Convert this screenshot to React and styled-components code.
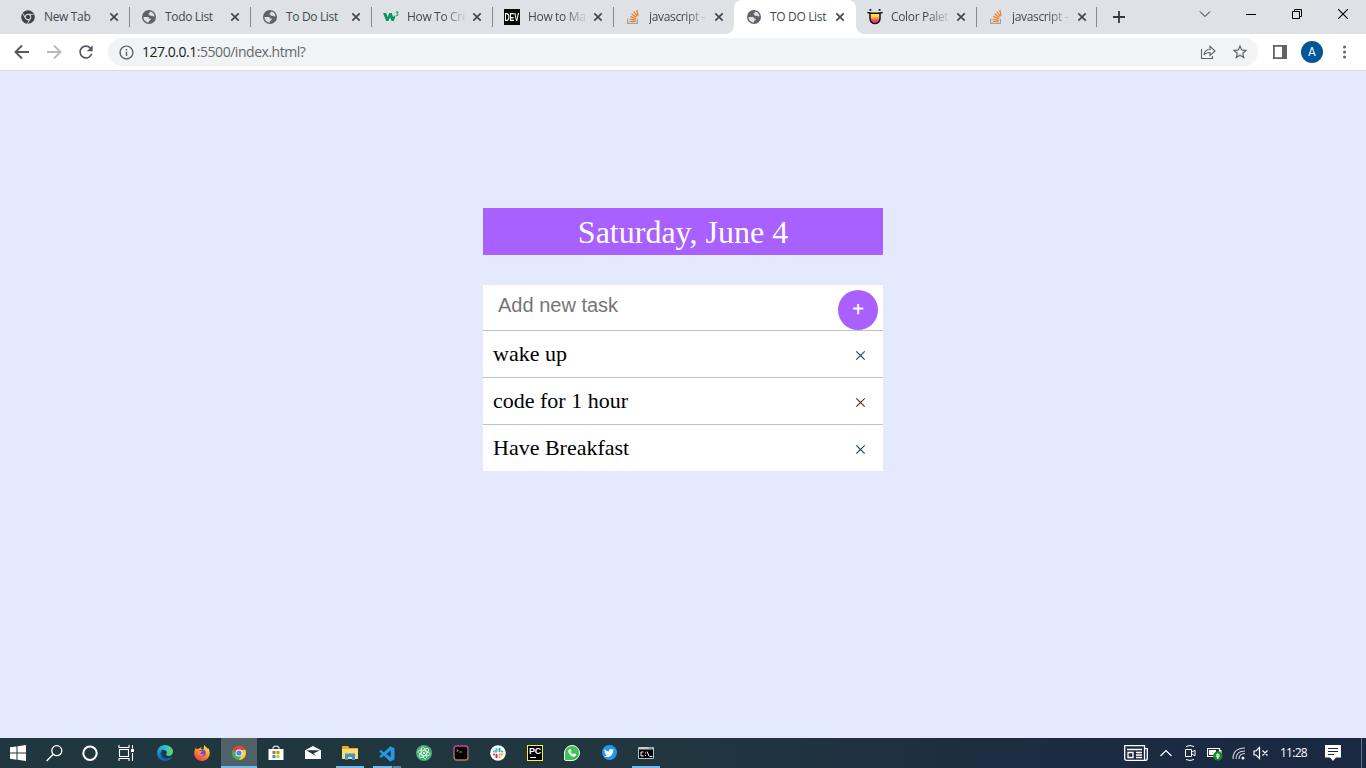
import React from "react";
import styled, { createGlobalStyle, css } from "styled-components";
import { FaChrome, FaTwitter } from "react-icons/fa";
import { MdInfoOutline, MdRefresh, MdStarBorder } from "react-icons/md";
import { BiLogoVisualStudio } from "react-icons/bi";

const GlobalStyle = createGlobalStyle`
  * { box-sizing: border-box; }
  body { margin: 0; overflow: hidden; background: #e4e9fd; }
  svg { display: block; flex: none; }
`;

const uiFont = `"Segoe UI", "Open Sans", "Noto Sans", sans-serif`;

const Screen = styled.div`
  width: 1366px;
  height: 768px;
  display: flex;
  flex-direction: column;
  overflow: hidden;
`;

/* ---------- Browser tabs ---------- */
const TabStrip = styled.div`
  flex: none;
  height: 34px;
  display: flex;
  padding-left: 9px;
  background: #dee1e6;
`;

const activeTab = css`
  margin-left: -1px;
  width: 122px;
  padding-left: 12px;
  background: #fff;
  border-radius: 8px 8px 0 0;
  position: relative;
  &::before, &::after {
    content: "";
    position: absolute;
    bottom: 0;
    width: 8px;
    height: 8px;
  }
  &::before { left: -8px; background: radial-gradient(circle at 0 0, transparent 7.5px, #fff 8px); }
  &::after { right: -8px; background: radial-gradient(circle at 100% 0, transparent 7.5px, #fff 8px); }
`;

const TabItem = styled.div`
  flex: none;
  width: 121px;
  height: 34px;
  display: flex;
  align-items: center;
  padding-left: 11px;
  ${(p) => p.$active && activeTab}
  &:nth-child(9) { width: 120px; }
`;

const TabTitle = styled.span`
  width: 58px;
  margin: 0 4px 0 8px;
  white-space: nowrap;
  font: 12px/18px ${uiFont};
  letter-spacing: -0.34px;
  color: #45494d;
  ${(p) => p.$fade && css`mask-image: linear-gradient(to right, #000 62%, transparent 104%);`}
`;

const TabDivider = styled.span`
  width: 1px;
  height: 20px;
  margin-left: auto;
  background: ${(p) => (p.$hidden ? "transparent" : "#85888d")};
`;

const NewTab = styled.div`
  width: 16px;
  margin: 9px 0 0 14px;
`;

const WindowControls = styled.div`
  margin-left: auto;
  height: 28px;
  display: flex;
  align-items: center;
`;

const WindowButton = styled.div`
  width: 46px;
  display: flex;
  justify-content: center;
`;

/* ---------- Toolbar ---------- */
const Toolbar = styled.div`
  flex: none;
  height: 37px;
  display: flex;
  align-items: center;
  padding: 0 12px 0 12px;
  background: #fff;
  border-bottom: 1px solid #dbdde3;
`;

const NavButtons = styled.div`
  display: flex;
  gap: 12px;
  width: 96px;
`;

const AddressBar = styled.div`
  width: 1150px;
  height: 28px;
  display: flex;
  align-items: center;
  padding: 0 9px 0 10px;
  border-radius: 14px;
  background: #f1f3f4;
`;

const Url = styled.span`
  margin-left: 7px;
  font: 14px/20px ${uiFont};
  letter-spacing: -0.47px;
  color: #202124;
  span { color: #64686c; }
`;

const AddressActions = styled.div`
  margin-left: auto;
  display: flex;
  align-items: center;
  gap: 15px;
`;

const ToolbarActions = styled.div`
  display: flex;
  align-items: center;
  margin-left: 14px;
`;

const Avatar = styled.div`
  width: 22px;
  height: 22px;
  margin: 0 14px 0 13px;
  border-radius: 50%;
  background: #01579b;
  color: #fff;
  text-align: center;
  font: 12px/22px Roboto, sans-serif;
`;

/* ---------- To-do page ---------- */
const Page = styled.main`
  flex: 1;
  background: #e4e9fd;
  padding-top: 137px;
`;

const Container = styled.div`
  width: 400px;
  margin: 0 auto;
`;

const DateHeading = styled.h1`
  margin: 0 0 30px;
  height: 47px;
  background: #a860ff;
  color: #fff;
  text-align: center;
  font: 400 32px/49px "Liberation Serif", serif;
`;

const TaskCard = styled.section`
  background: #fff;
`;

const TaskForm = styled.div`
  height: 45px;
  display: flex;
  justify-content: space-between;
  padding: 5px 5px 0 15px;
`;

const TaskInput = styled.input`
  border: 0;
  padding: 0;
  width: 280px;
  height: 30px;
  outline: 0;
  background: transparent;
  font: 20px "Liberation Sans", sans-serif;
  &::placeholder { color: #757575; opacity: 1; }
`;

const AddButton = styled.button`
  width: 40px;
  height: 40px;
  padding: 0 0 2px;
  border: 0;
  border-radius: 50%;
  background: #a860ff;
  color: #fff;
  font: 20px "Liberation Sans", sans-serif;
  -webkit-text-stroke: 0.25px #fff;
`;

const TaskList = styled.ul`
  list-style: none;
  margin: 0;
  padding: 0;
`;

const TaskRow = styled.li`
  height: 47px;
  display: flex;
  align-items: center;
  justify-content: space-between;
  padding: 0 17px 0 10px;
  border-top: 1px solid #c0c0c0;
  font: 22px/46px "Liberation Serif", serif;
  color: #000;
`;

const DeleteMark = styled.svg`
  margin-top: 3px;
`;

/* ---------- Taskbar ---------- */
const Taskbar = styled.footer`
  flex: none;
  height: 30px;
  display: flex;
  background: linear-gradient(90deg, #20373f 0, #21363f 50%, #1c2a42 80%, #1b2842 100%);
`;

const SystemButtons = styled.div`
  display: flex;
  width: 147px;
`;

const Apps = styled.div`
  display: flex;
  gap: 1px;
`;

const TaskButton = styled.div`
  width: 36px;
  height: 30px;
  display: flex;
  flex-direction: column;
  align-items: center;
  justify-content: space-between;
  padding-top: 7px;
  background: ${(p) => (p.$focused ? "#506168" : "transparent")};
`;

const Indicator = styled.span`
  width: ${(p) => (p.$wide ? 36 : 28)}px;
  height: 2px;
  background: ${(p) => (p.$split ? "linear-gradient(90deg,#76b9ed 19px,#3c5968 19px,#3c5968 20px,#5389ae 20px)" : "#76b9ed")};
`;

const Tray = styled.div`
  margin-left: auto;
  width: 243px;
  display: flex;
  align-items: center;
`;

const TrayIcon = styled.span`
  margin-left: ${(p) => p.$gap}px;
`;

const Clock = styled.span`
  width: 28px;
  margin-left: 11px;
  white-space: nowrap;
  font: 12px/30px ${uiFont};
  letter-spacing: -0.75px;
  color: #fff;
`;

const DesktopEdge = styled.span`
  width: 1px;
  height: 30px;
  margin-left: 20px;
  background: #687184;
`;

const Globe = () => (
  <svg width="16" height="16" viewBox="0 0 16 16">
    <circle cx="8" cy="8" r="7" fill="#5f6368" />
    <path d="M9.300 2.500c2.300.5 4 2.400 4.200 4.800-.8.500-1.800.3-2.300-.5H9.500c-.8 0-1.200-.6-1-1.300-.8 0-1.200-.7-.8-1.300.6-.2 1.200-.7 1.600-1.700z" fill="#dee1e6" />
    <path d="M2.500 8h3.800c1.300 0 1.800.7 1.700 1.600h1.200c.8.200.8 1.300 0 1.700L7.900 12v1.500c-3 0-5.300-2.300-5.400-5.500z" fill="#dee1e6" />
  </svg>
);

const StackOverflow = () => (
  <svg width="16" height="16" viewBox="0 0 16 16" fill="none">
    <path d="M2.600 9.800v4.600h9.800V9.800" stroke="#a0a3a6" strokeWidth="1.200" />
    <path d="M4.600 12.300h6M4.700 10l5.900 1.100M5.300 7.400l5.400 2.400M6.600 4.800l4.700 3.700M8.900 2.500l3.500 4.900M11.800 1l1.300 5.700" stroke="#f47d20" strokeWidth="1.250" />
  </svg>
);

const W3Schools = () => (
  <svg width="16" height="16" viewBox="0 0 16 16" fill="#059862">
    <path d="M0 4h3.200l1.500 4.300L6.300 4h2.500l1.400 4.300L11 6.500l1.500.8L10.800 12H8.600L7 8.200 5.300 12H3.200z" />
    <path d="M12.700 3h2.500l-1.300 1.700c1.800.1 1.700 2.500-1.100 1.800" fill="none" stroke="#059862" />
  </svg>
);

const DevMark = styled.span`
  flex: none;
  width: 16px;
  height: 16px;
  display: flex;
  justify-content: center;
  background: #090909;
  color: #fff;
  font: 700 10.5px/16px "Liberation Sans", sans-serif;
  span { transform: scaleX(0.68); }
`;

const ColorHunt = () => (
  <svg width="16" height="16" viewBox="0 0 16 16">
    <path d="M3 4h10v5.500a5 5 0 0 1-10 0z" fill="#ffde32" />
    <path d="M3 8h10v1.500a5 5 0 0 1-.7 2.500H3.700A5 5 0 0 1 3 9.500z" fill="#ff9a51" />
    <path d="M3.500 10.300h9A5 5 0 0 1 8 14.500a5 5 0 0 1-4.500-4.200z" fill="#f6416c" />
    <path d="M.4 3.300c2 1.100 13.200 1.100 15.200 0M3 4v5.600a5 5 0 0 0 10 0V4" fill="none" stroke="#15151a" strokeWidth="1.500" />
    <path d="M2.500.8h1.800M11.700.8h1.800" stroke="#15151a" strokeWidth="1.700" />
  </svg>
);

const CloseIcon = () => (
  <svg width="16" height="16" viewBox="0 0 16 16">
    <path d="M4.300 4.300l7.400 7.400m0-7.400l-7.400 7.400" stroke="#45494d" strokeWidth="1.700" />
  </svg>
);

const ChromeMark = styled(FaChrome)`
  margin: 0 1px;
  color: #3f4347;
`;

const tabs = [
  { title: "New Tab", icon: <ChromeMark size={14} /> },
  { title: "Todo List", icon: <Globe /> },
  { title: "To Do List", icon: <Globe /> },
  { title: "How To Cre", icon: <W3Schools />, fade: true },
  { title: "How to Ma", icon: <DevMark><span>DEV</span></DevMark>, fade: true },
  { title: "javascript -", icon: <StackOverflow />, fade: true },
  { title: "TO DO List", icon: <Globe />, active: true },
  { title: "Color Palet", icon: <ColorHunt />, fade: true },
  { title: "javascript -", icon: <StackOverflow />, fade: true },
];

const ChromeLogo = () => (
  <svg width="16" height="16" viewBox="0 0 16 16">
    <circle cx="8" cy="8" r="7" fill="#4caf50" />
    <path d="M1.940 4.500A7 7 0 0 1 14.060 4.500L8 5 5 9.500z" fill="#ea4335" />
    <path d="M14.060 4.500A7 7 0 0 1 8 15l3-5.300L10.500 4.800z" fill="#ffcd40" />
    <path d="M8 4.500h6.060" stroke="#ea4335" strokeWidth="1" />
    <circle cx="8" cy="8" r="3.500" fill="#fff" />
    <circle cx="8" cy="8" r="2.600" fill="#4285f4" />
  </svg>
);

const EdgeLogo = () => (
  <svg width="16" height="16" viewBox="0 0 16 16">
    <defs>
      <linearGradient id="edgeTop"><stop stopColor="#249fde" /><stop offset=".55" stopColor="#32c3c8" /><stop offset="1" stopColor="#68d957" /></linearGradient>
      <linearGradient id="edgeLow" x2="0" y2="1"><stop stopColor="#209ae5" /><stop offset="1" stopColor="#125cb0" /></linearGradient>
    </defs>
    <path d="M0 8C0 3.600 3.600 0 8 0s8 3 8 6.700c0 2.500-2 4.300-4.200 4.300-2 0-2.700-.8-2.700-1.400 0-.5.700-.8.700-2C9.800 5.900 8 4.700 6 4.700 3 4.700.4 6.500 0 8z" fill="url(#edgeTop)" />
    <path d="M0 8c.5-2.200 3-3.500 5.500-3.300C4.200 5.500 3.700 6.600 3.700 8.500c0 3 2.500 5 5.800 5 2 0 3.500-.8 4.500-1.500.5-.3.900.100.500.700C13.200 14.700 10.800 16 8 16c-4.400 0-8-3.600-8-8z" fill="url(#edgeLow)" />
    <path d="M5.500 8c0-1.200.5-2.200 1.500-2.800-2.600 1-3.500 2.700-3.300 4.400.4 3.200 3.300 5 7 4.200C7.500 13 5.500 11 5.500 8z" fill="#114a8b" />
  </svg>
);

const FirefoxLogo = () => (
  <svg width="16" height="16" viewBox="0 0 16 16">
    <defs>
      <linearGradient id="fox" x1=".8" y1="0" x2=".2" y2="1"><stop stopColor="#fff04b" /><stop offset=".45" stopColor="#ff9a22" /><stop offset="1" stopColor="#f02e58" /></linearGradient>
    </defs>
    <path d="M2.200 2.200l.3 2 1.800-.5C5.500 4 6 2.500 7.500 2L7.200 4l2 .5C10.500 3 9.500 1 10.200 0c1 1.600 2.700 2.200 3.200 3.800l.8-.7c2.500 4 2 8.500-1.500 11.300-4 3.200-10.700 1.500-12.200-3.600C-.2 8 .500 4.500 2.200 2.200z" fill="url(#fox)" />
    <circle cx="8.200" cy="8.100" r="3.500" fill="#7542e5" />
    <path d="M4 5.500l3.200.3 1.300 1-2.300 1.300c.6 1.800 3 1.800 4.200.8-.4 2.400-5.500 3.300-7-.3z" fill="#ff8a2c" />
  </svg>
);

const AtomLogo = () => (
  <svg width="16" height="16" viewBox="0 0 16 16" fill="none">
    <circle cx="8" cy="8" r="8" fill="#45ae77" />
    <g stroke="#dcfae9" strokeWidth=".9">
      <ellipse cx="8" cy="8" rx="6" ry="2.500" transform="rotate(15 8 8)" />
      <ellipse cx="8" cy="8" rx="6" ry="2.500" transform="rotate(75 8 8)" />
      <ellipse cx="8" cy="8" rx="6" ry="2.500" transform="rotate(135 8 8)" />
    </g>
    <circle cx="8" cy="8" r="1" fill="#fff" />
  </svg>
);

const TerminalLogo = () => (
  <svg width="16" height="16" viewBox="0 0 16 16" fill="none">
    <defs><linearGradient id="term" x2="0" y2="1"><stop stopColor="#ca459f" /><stop offset="1" stopColor="#b87a4a" /></linearGradient></defs>
    <rect x="1" y="1" width="14" height="14" rx="2.500" fill="#000" stroke="url(#term)" strokeWidth="1.400" />
    <path d="M3.700 4.500l1.600 1-1.600 1M6.500 7h2.300" stroke="#ddd" strokeWidth=".8" />
  </svg>
);

const SlackLogo = () => (
  <svg width="16" height="16" viewBox="0 0 16 16" fill="none" strokeWidth="2" strokeLinecap="round">
    <circle cx="8" cy="8" r="7.800" fill="#fff" />
    <path d="M6.500 4v2.300M3.900 6.500h2.300" stroke="#36c5f0" />
    <path d="M9.500 3.700v2.600M12 6.500h.200" stroke="#2eb67d" />
    <path d="M9.700 9.500h2.500M9.500 12v.2" stroke="#ecb22e" />
    <path d="M6.500 9.700v2.500M4 9.500h-.1" stroke="#e01e5a" />
  </svg>
);

const PyCharmBox = styled.span`
  width: 16px;
  height: 16px;
  border: 1px solid #f5f33e;
  background: #000;
  color: #fff;
  font: 700 9px/11px "Liberation Sans", sans-serif;
  letter-spacing: -0.3px;
  padding-left: 1px;
  &::after { content: ""; display: block; width: 6px; height: 1px; margin: 0 0 0 1px; background: #fff; }
`;

const WhatsAppBadge = styled.span`
  width: 16px;
  height: 16px;
  display: grid;
  place-items: center;
  border: 1px solid #f2fff5;
  border-radius: 50% 50% 50% 2px;
  background: #40c351;
`;

const Handset = () => (
  <svg width="10" height="10" viewBox="0 0 10 10"><path d="M2.200 1.200L3.500 1l1 2-.8 1c.6 1.100 1.300 1.700 2.500 2.200l.9-.9 2 1-.2 1.200C7.500 9.500 5 8.700 3.300 7 1.400 5.200.4 2.800 2.200 1.200z" fill="#fff" /></svg>
);

const TwitterBadge = styled.span`
  width: 15px;
  height: 15px;
  display: grid;
  place-items: center;
  border-radius: 50%;
  background: #1d9bf0;
`;

const StoreLogo = () => (
  <svg width="16" height="16" viewBox="0 0 16 16">
    <path d="M5 5V3.300C5 .4 11 .4 11 3.300V5" fill="none" stroke="#d8dde0" strokeWidth="1.100" />
    <path d="M.5 4h15v11h-15z" fill="#fff" />
    <path d="M4.500 6h3v3h-3z" fill="#f25022" /><path d="M8.500 6h3v3h-3z" fill="#7fba00" />
    <path d="M4.500 10h3v3h-3z" fill="#00a4ef" /><path d="M8.500 10h3v3h-3z" fill="#ffb900" />
  </svg>
);

const MailLogo = () => (
  <svg width="16" height="16" viewBox="0 0 16 16">
    <path d="M0 5.200L8 1l8 4.200V14H0z" fill="#fff" />
    <path d="M1.200 5.300h13.600L8.500 8.500l2.800 2.700z" fill="#20353e" />
  </svg>
);

const FolderLogo = () => (
  <svg width="16" height="16" viewBox="0 0 16 16">
    <path d="M0 1h6l1.500 2H16v3H0z" fill="#e9ae22" />
    <path d="M0 4h16v10H0z" fill="#ffd96a" />
    <path d="M3 15V8.500h10V15h-3v-3H6v3z" fill="#3b96d9" />
  </svg>
);

const CmdLogo = () => (
  <svg width="16" height="16" viewBox="0 0 16 16">
    <path d="M.5 2.500h15v11H.5z" fill="#000" stroke="#bbc1c5" />
    <path d="M1 2h14v2.500H1z" fill="#c7cdd1" /><path d="M10.500 2.500h4v1h-4z" fill="#5b7b9b" />
    <path d="M5.500 7H3v4h2.500M7.500 7.500v1m0 1.500v1M9 6.500l2 4.500M11.500 11.500h3" fill="none" stroke="#fff" />
  </svg>
);

const systemIcons = [
  <svg key="windows" width="16" height="16" viewBox="0 0 16 16"><path fill="#fff" d="M0 2.300L6.500 1.400v6.200H0zM7.500 1.200L16 0v7.600H7.500zM0 8.500h6.500v6.200L0 13.800zM7.500 8.500H16V16l-8.500-1.200z" /></svg>,
  <svg key="search" width="17" height="17" viewBox="0 0 17 17" fill="none" stroke="#fff" strokeWidth="1.300"><circle cx="10.800" cy="5.700" r="5" /><path d="M7.200 9.300L.6 16" /></svg>,
  <svg key="cortana" width="16" height="16" viewBox="0 0 16 16"><circle cx="8" cy="8.300" r="6.700" fill="none" stroke="#fff" strokeWidth="2" /></svg>,
  <svg key="taskview" width="17" height="16" viewBox="0 0 17 16" fill="none" stroke="#fff" strokeWidth="1.100"><path d="M1 0v2.500h10V0M1.500 4.500h9v7h-9zM1 16v-2.500h10V16M14.500 0v3.500M14.500 8v8" /><path d="M13 4h3v3h-3z" fill="#fff" stroke="none" /></svg>,
];

const apps = [
  { id: "edge", icon: <EdgeLogo /> },
  { id: "firefox", icon: <FirefoxLogo /> },
  { id: "chrome", icon: <ChromeLogo />, focused: true, open: true },
  { id: "store", icon: <StoreLogo /> },
  { id: "mail", icon: <MailLogo /> },
  { id: "folder", icon: <FolderLogo />, open: true },
  { id: "code", icon: <BiLogoVisualStudio size={18} color="#229be6" />, open: true, split: true },
  { id: "atom", icon: <AtomLogo /> },
  { id: "terminal", icon: <TerminalLogo /> },
  { id: "slack", icon: <SlackLogo /> },
  { id: "pycharm", icon: <PyCharmBox>PC</PyCharmBox> },
  { id: "whatsapp", icon: <WhatsAppBadge><Handset /></WhatsAppBadge> },
  { id: "twitter", icon: <TwitterBadge><FaTwitter size={10} color="#fff" /></TwitterBadge> },
  { id: "cmd", icon: <CmdLogo />, open: true },
];

const tasks = ["wake up", "code for 1 hour", "Have Breakfast"];
const markColors = ["#1d4858", "#682528", "#1d4858"];

function BrowserTabs() {
  return (
    <TabStrip>
      {tabs.map((t, i) => (
        <TabItem key={i} $active={t.active}>
          {t.icon}
          <TabTitle $fade={t.fade}>{t.title}</TabTitle>
          <CloseIcon />
          <TabDivider $hidden={i === 5 || i === 6} />
        </TabItem>
      ))}
      <NewTab>
        <svg width="16" height="16" viewBox="0 0 16 16"><path d="M8 2v12M2 8h12" stroke="#35383b" strokeWidth="1.800" /></svg>
      </NewTab>
      <WindowControls>
        <WindowButton><svg width="12" height="12" viewBox="0 0 12 12"><path d="M1 3.500l5 5 5-5" fill="none" stroke="#222" /></svg></WindowButton>
        <WindowButton><svg width="10" height="10" viewBox="0 0 10 10"><path d="M0 5.500h10" stroke="#000" /></svg></WindowButton>
        <WindowButton><svg width="10" height="10" viewBox="0 0 10 10" fill="none" stroke="#000"><path d="M.5 2.500h7v7h-7zM2.500 2.500v-2h7v7h-2" /></svg></WindowButton>
        <WindowButton><svg width="10" height="10" viewBox="0 0 10 10"><path d="M0 0l10 10M10 0L0 10" stroke="#000" strokeWidth="1.100" /></svg></WindowButton>
      </WindowControls>
    </TabStrip>
  );
}

function BrowserToolbar() {
  return (
    <Toolbar>
      <NavButtons>
        <svg width="20" height="20" viewBox="0 0 20 20" fill="none" stroke="#55595e" strokeWidth="1.900"><path d="M17 10H4M10 3.500L3.500 10l6.500 6.500" /></svg>
        <svg width="20" height="20" viewBox="0 0 20 20" fill="none" stroke="#b8babc" strokeWidth="1.900"><path d="M3 10h13M10 3.500l6.500 6.500-6.500 6.500" /></svg>
        <MdRefresh size={20} color="#55595e" />
      </NavButtons>
      <AddressBar>
        <MdInfoOutline size={17} color="#5f6368" />
        <Url>127.0.0.1<span>:5500/index.html?</span></Url>
        <AddressActions>
          <svg width="16" height="16" viewBox="0 0 16 16" fill="none" stroke="#5f6368" strokeWidth="1.100"><path d="M1.500 5v9.500h11V12M4 11c.5-4 2.500-5.500 6-5.500V2.300L15 7l-5 4.500V8.500C7 8.500 5.300 9 4 11z" /></svg>
          <MdStarBorder size={18} color="#5f6368" />
        </AddressActions>
      </AddressBar>
      <ToolbarActions>
        <svg width="16" height="16" viewBox="0 0 16 16"><path d="M1.900 1.900h12.200v12.200H1.900z" fill="#fff" stroke="#5f6368" strokeWidth="1.800" /><path d="M10 1h5v14h-5z" fill="#5f6368" /></svg>
        <Avatar>A</Avatar>
        <svg width="16" height="16" viewBox="0 0 16 16" fill="#5f6368"><circle cx="7.500" cy="3" r="1.500" /><circle cx="7.500" cy="8" r="1.500" /><circle cx="7.500" cy="13" r="1.500" /></svg>
      </ToolbarActions>
    </Toolbar>
  );
}

function TodoPage() {
  return (
    <Page>
      <Container>
        <DateHeading>Saturday, June 4</DateHeading>
        <TaskCard>
          <TaskForm>
            <TaskInput placeholder="Add new task" />
            <AddButton>+</AddButton>
          </TaskForm>
          <TaskList>
            {tasks.map((task, i) => (
              <TaskRow key={task}>
                {task}
                <DeleteMark width="11" height="11" viewBox="0 0 11 11"><path d="M1.300 1.300l8.400 8.400M9.700 1.300l-8.400 8.400" stroke={markColors[i]} strokeWidth="1.150" /></DeleteMark>
              </TaskRow>
            ))}
          </TaskList>
        </TaskCard>
      </Container>
    </Page>
  );
}

function SystemTaskbar() {
  return (
    <Taskbar>
      <SystemButtons>{systemIcons.map((icon) => <TaskButton key={icon.key}>{icon}</TaskButton>)}</SystemButtons>
      <Apps>
        {apps.map((a) => (
          <TaskButton key={a.id} $focused={a.focused}>
            {a.icon}
            {a.open && <Indicator $wide={a.focused} $split={a.split} />}
          </TaskButton>
        ))}
      </Apps>
      <Tray>
        <TrayIcon $gap={1}><svg width="24" height="16" viewBox="0 0 24 16" fill="none" stroke="#fff" strokeWidth="1.300"><path d="M1 .7h19.500v14.600H2.500C1.500 15.300.7 14.500.7 13.500V.7zM20.500 3.700h2.800v9.600c0 1.200-.8 2-1.800 2h-2M3 4.500h15M12 7.500h6M12 10h6M12 12.500h6M4 7.500h5v5H4z" /></svg></TrayIcon>
        <TrayIcon $gap={12}><svg width="12" height="8" viewBox="0 0 12 8"><path d="M.5 7L6 1.500 11.500 7" fill="none" stroke="#fff" strokeWidth="1.200" /></svg></TrayIcon>
        <TrayIcon $gap={12}><svg width="12" height="16" viewBox="0 0 12 16" fill="none" stroke="#fff"><path d="M1.500 4.500h6v7h-6zM8 7l3-1.800v5.600L8 9M2 1.500Q6-.5 10 1.500M2 14.500q4 2 8 0" /></svg></TrayIcon>
        <TrayIcon $gap={11}><svg width="16" height="16" viewBox="0 0 16 16"><path d="M.5 3.500h12v8H.5zM12.500 5.500h1.500v3h-1.500" fill="none" stroke="#fff" strokeWidth="1.200" /><path d="M2 5h7v5H2z" fill="#fff" /><circle cx="10.800" cy="11" r="4.700" fill="#148a22" /><path d="M10.800 14V9m0-.5c-2 1.500-2 3.500 0 4 2-.5 2-2.500 0-4z" fill="none" stroke="#fff" /></svg></TrayIcon>
        <TrayIcon $gap={9}><svg width="14" height="14" viewBox="0 0 14 14" fill="none" stroke="#d0d7de" strokeWidth="1.150"><path d="M1 13C1 6 5 2 13 2M4 13c0-5 3-8 9-8M7 13c0-3.500 2.500-5.500 6-5.500" /><circle cx="11" cy="12" r="1.500" fill="#fff" stroke="none" /></svg></TrayIcon>
        <TrayIcon $gap={7}><svg width="16" height="14" viewBox="0 0 16 14" fill="none" stroke="#fff" strokeWidth="1.200"><path d="M1 5h2l3.500-3.500v11L3 9H1zM9.500 4.500l5 5m0-5l-5 5" /></svg></TrayIcon>
        <Clock>11:28</Clock>
        <TrayIcon $gap={17}><svg width="16" height="16" viewBox="0 0 16 16"><path d="M0 0h16v12.500h-5L8 16l-3-3.500H0z" fill="#fff" /><path d="M3 3.500h10M3 6.500h10M3 9.500h6" stroke="#1b2842" /></svg></TrayIcon>
        <DesktopEdge />
      </Tray>
    </Taskbar>
  );
}

export default function App() {
  return (
    <>
      <GlobalStyle />
      <Screen>
        <BrowserTabs />
        <BrowserToolbar />
        <TodoPage />
        <SystemTaskbar />
      </Screen>
    </>
  );
}
